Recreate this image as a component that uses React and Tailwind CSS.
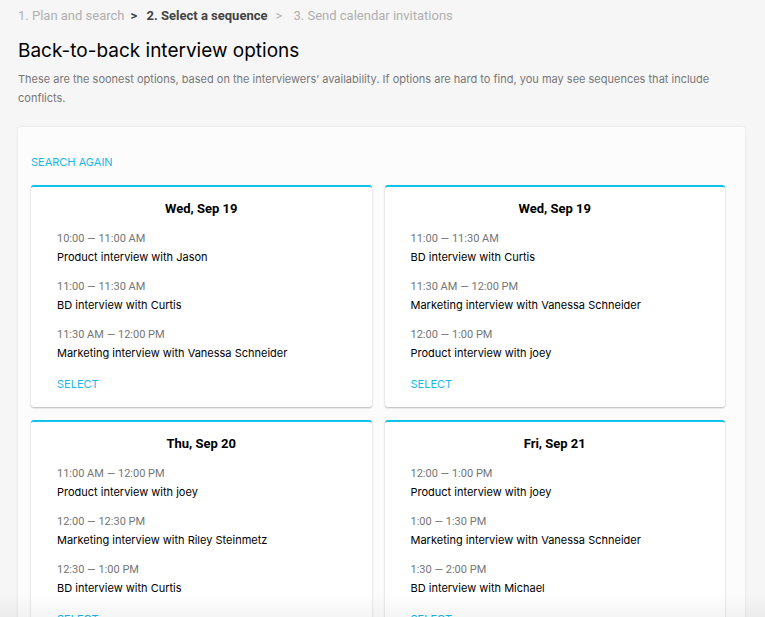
import React from "react";

const options = [
  {
    day: "Wed, Sep 19",
    slots: [
      ["10:00 — 11:00 AM", "Product interview with Jason"],
      ["11:00 — 11:30 AM", "BD interview with Curtis"],
      ["11:30 AM — 12:00 PM", "Marketing interview with Vanessa Schneider"],
    ],
  },
  {
    day: "Wed, Sep 19",
    slots: [
      ["11:00 — 11:30 AM", "BD interview with Curtis"],
      ["11:30 AM — 12:00 PM", "Marketing interview with Vanessa Schneider"],
      ["12:00 — 1:00 PM", "Product interview with joey"],
    ],
  },
  {
    day: "Thu, Sep 20",
    slots: [
      ["11:00 AM — 12:00 PM", "Product interview with joey"],
      ["12:00 — 12:30 PM", "Marketing interview with Riley Steinmetz"],
      ["12:30 — 1:00 PM", "BD interview with Curtis"],
    ],
  },
  {
    day: "Fri, Sep 21",
    slots: [
      ["12:00 — 1:00 PM", "Product interview with joey"],
      ["1:00 — 1:30 PM", "Marketing interview with Vanessa Schneider"],
      ["1:30 — 2:00 PM", "BD interview with Michael"],
    ],
  },
];

function OptionCard({ option }) {
  return (
    <article className="rounded-[3px] border-t-2 border-[#0fc3ea] bg-white px-[26px] pt-3 pb-[14px] shadow-[0_1px_2px_rgba(0,0,0,0.28)]">
      <h2 className="text-center font-[Roboto,sans-serif] text-[13px] leading-5 font-bold">{option.day}</h2>
      <ul className="mt-[11px] flex flex-col gap-3 text-[11px] leading-[18px]">
        {option.slots.map(([time, title]) => (
          <li key={time}>
            <p className="font-[Roboto,sans-serif] text-[#757575]">{time}</p>
            <p>{title}</p>
          </li>
        ))}
      </ul>
      <button type="button" className="mt-[13px] block text-[11px] leading-[18px] text-[#16b9e6]">
        SELECT
      </button>
    </article>
  );
}

export default function App() {
  return (
    <div className="h-screen overflow-hidden bg-[#f6f6f6] pt-[6px] pr-5 pl-[18px] font-[Inter,sans-serif] text-black">
      <nav aria-label="Steps">
        <ol className="flex font-[Roboto,sans-serif] text-[13px] leading-5 text-[#b0b0b0]">
          <li>1. Plan and search</li>
          <li className="flex font-bold text-[#444444]" aria-current="step">
            <span className="w-[22px] pl-[6px]">&gt;</span>2. Select a sequence
          </li>
          <li className="flex">
            <span className="w-[26px] pl-2">&gt;</span>3. Send calendar invitations
          </li>
        </ol>
      </nav>
      <h1 className="mt-[11px] text-[19px] leading-7">Back-to-back interview options</h1>
      <p className="mt-[5px] text-[11px] leading-[19px] text-[#777777]">
        These are the soonest options, based on the interviewers’ availability. If options are hard to find, you may
        see sequences that include conflicts.
      </p>
      <main className="mt-[19px] rounded-[3px] bg-[#fcfcfc] pt-[26px] pr-5 pb-5 pl-[13px] shadow-[0_0_3px_rgba(0,0,0,0.09)]">
        <button type="button" className="block text-[11px] leading-[18px] text-[#16b9e6]">
          SEARCH AGAIN
        </button>
        <div className="mt-[14px] grid grid-cols-2 gap-[13px]">
          {options.map((option, i) => (
            <OptionCard key={i} option={option} />
          ))}
        </div>
      </main>
      <div className="pointer-events-none fixed inset-x-0 bottom-0 h-6 bg-linear-to-t from-black/4 to-transparent" />
    </div>
  );
}
